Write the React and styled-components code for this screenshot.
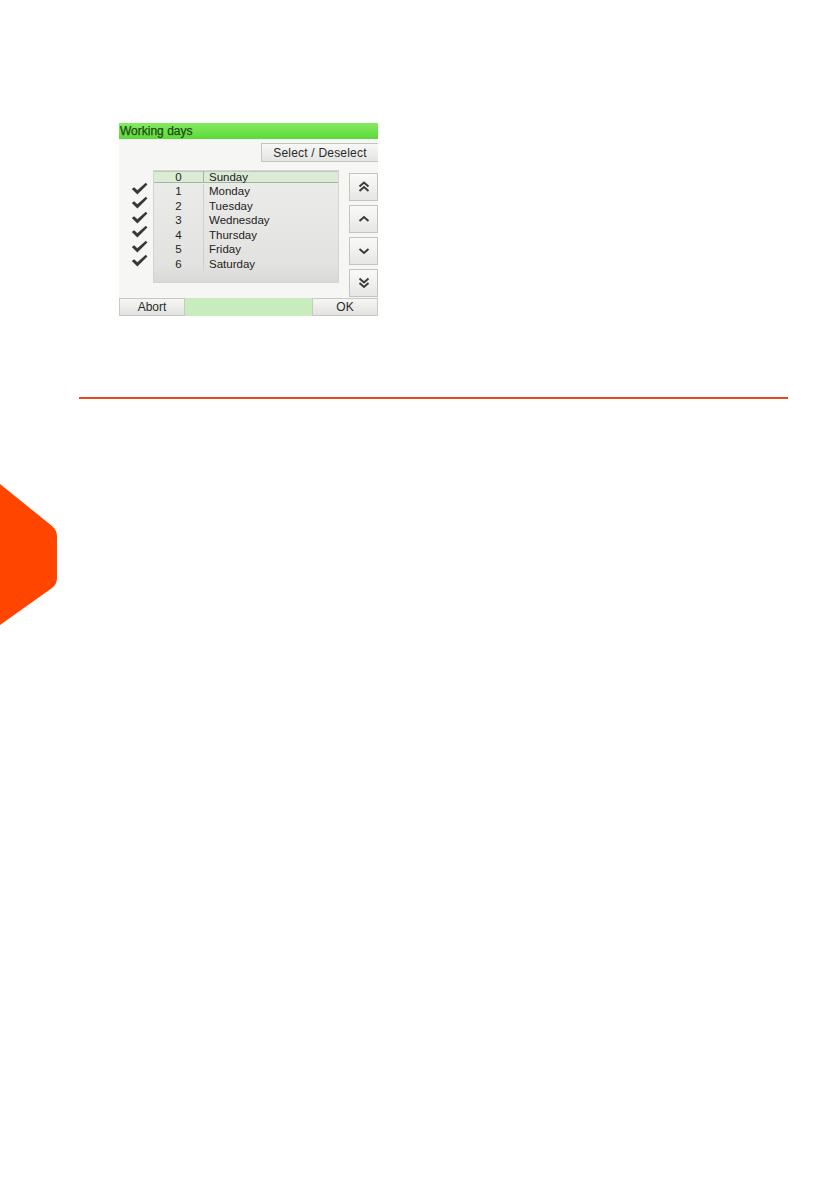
import React from 'react';
import styled, { createGlobalStyle } from 'styled-components';

const GlobalStyle = createGlobalStyle`
  html, body {
    margin: 0;
    padding: 0;
    background: #ffffff;
  }
  body {
    font-family: "Liberation Sans", Arial, sans-serif;
  }
`;

const Page = styled.div`
  width: 839px;
  min-height: 1191px;
  background: #fff;
  display: flex;
  flex-direction: column;
`;

const Figure = styled.div`
  padding: 123px 0 0 119px;
`;

const Screen = styled.div`
  width: 259px;
  height: 193px;
  display: flex;
  flex-direction: column;
  background: #f6f6f4;
  font-family: "Liberation Sans", Arial, sans-serif;
  font-size: 11.5px;
  color: #222;
`;

const TitleBar = styled.div`
  height: 16px;
  line-height: 16px;
  padding-left: 1px;
  background: linear-gradient(#84ea60, #5cd83a);
  color: #1e4a14;
  font-size: 12px;
  -webkit-text-stroke: 0.25px #1e4a14;
`;

const Body = styled.div`
  flex: 1;
  display: flex;
  flex-direction: column;
`;

const ToolRow = styled.div`
  display: flex;
  justify-content: flex-end;
  margin-top: 4px;
`;

const Button = styled.div`
  height: ${p => p.$h || 19}px;
  width: ${p => p.$w}px;
  box-sizing: border-box;
  display: flex;
  align-items: center;
  justify-content: center;
  background: linear-gradient(#f8f8f6, #e4e4e2);
  border: 1px solid #c4c4c0;
  border-right: none;
  font-size: 12px;
  color: #2a2a2a;
  letter-spacing: 0.2px;
`;

const MainRow = styled.div`
  flex: 1;
  display: flex;
  margin-top: 8px;
`;

const CheckCol = styled.div`
  width: 34px;
  padding-top: 11px;
  display: flex;
  flex-direction: column;
  align-items: center;
`;

const CheckCell = styled.div`
  height: 14.5px;
  display: flex;
  align-items: center;
  padding-left: 6px;
`;

const List = styled.div`
  width: 186px;
  height: 113px;
  box-sizing: border-box;
  background: linear-gradient(#ececea, #e2e2e0 85%, #d8d8d6);
  border: 1px solid #d4d4d0;
  display: flex;
  flex-direction: column;
`;

const Row = styled.div`
  height: ${p => (p.$head ? 11 : 14.5)}px;
  display: flex;
  align-items: center;
  background: ${p => (p.$head ? '#dcebd6' : 'transparent')};
  border-bottom: ${p => (p.$head ? '1px solid #9fb89a' : 'none')};
  box-shadow: ${p => (p.$head ? 'inset 0 1px 0 #b8cdb2' : 'none')};
  margin-bottom: ${p => (p.$head ? 1 : 0)}px;
`;

const NumCell = styled.div`
  width: 49px;
  text-align: center;
  align-self: stretch;
  display: flex;
  align-items: center;
  justify-content: center;
  border-right: 1px solid ${p => (p.$head ? '#9fb89a' : '#d0d0cc')};
`;

const NameCell = styled.div`
  padding-left: 5px;
`;

const ScrollCol = styled.div`
  margin-left: 10px;
  margin-top: 3px;
  display: flex;
  flex-direction: column;
  gap: 4px;
`;

const ScrollBtn = styled.div`
  width: 29px;
  height: 28px;
  box-sizing: border-box;
  display: flex;
  align-items: center;
  justify-content: center;
  background: linear-gradient(#fafaf8, #e6e6e4);
  border: 1px solid #c4c4c0;
`;

const Footer = styled.div`
  height: 18px;
  display: flex;
  background: #c9ecbe;
`;

const FooterBtn = styled.div`
  width: ${p => p.$w}px;
  box-sizing: border-box;
  display: flex;
  align-items: center;
  justify-content: center;
  background: linear-gradient(#f6f6f4, #e2e2e0);
  border: 1px solid #c8c8c4;
  font-size: 12px;
  color: #2a2a2a;
`;

const Spacer = styled.div`
  flex: 1;
`;

const Rule = styled.div`
  margin: 81px 0 0 79px;
  width: 709px;
  height: 2px;
  background: #e8481c;
`;

const SideTab = styled.div`
  margin-top: 85px;
  width: 58px;
  height: 141px;
`;

const Check = () => (
  <svg width="17" height="13" viewBox="0 0 17 13">
    <path d="M0.8 7 L3.2 5.2 L6.3 8.2 L14.8 0.8 L16.4 2.6 L6.4 12.4 Z" fill="#383838" />
  </svg>
);

const Chevron = ({ dir, double }) => {
  const up = dir === 'up';
  const one = y => (up ? `M2.5 ${y + 4} L7 ${y} L11.5 ${y + 4}` : `M2.5 ${y} L7 ${y + 4} L11.5 ${y}`);
  return (
    <svg width="14" height="12" viewBox="0 0 14 12">
      {double ? (
        <>
          <path d={one(1.5)} fill="none" stroke="#3a3a3a" strokeWidth="1.9" />
          <path d={one(6)} fill="none" stroke="#3a3a3a" strokeWidth="1.9" />
        </>
      ) : (
        <path d={one(4)} fill="none" stroke="#3a3a3a" strokeWidth="1.9" />
      )}
    </svg>
  );
};

const days = [
  { n: 0, name: 'Sunday', on: false },
  { n: 1, name: 'Monday', on: true },
  { n: 2, name: 'Tuesday', on: true },
  { n: 3, name: 'Wednesday', on: true },
  { n: 4, name: 'Thursday', on: true },
  { n: 5, name: 'Friday', on: true },
  { n: 6, name: 'Saturday', on: true },
];

export default function App() {
  return (
    <Page>
      <GlobalStyle />
      <Figure>
        <Screen>
          <TitleBar>Working days</TitleBar>
          <Body>
            <ToolRow>
              <Button $w={117}>Select / Deselect</Button>
            </ToolRow>
            <MainRow>
              <CheckCol>
                {days.slice(1).map(d => (
                  <CheckCell key={d.n}>{d.on && <Check />}</CheckCell>
                ))}
              </CheckCol>
              <List>
                {days.map((d, i) => (
                  <Row key={d.n} $head={i === 0}>
                    <NumCell $head={i === 0}>{d.n}</NumCell>
                    <NameCell>{d.name}</NameCell>
                  </Row>
                ))}
              </List>
              <ScrollCol>
                <ScrollBtn><Chevron dir="up" double /></ScrollBtn>
                <ScrollBtn><Chevron dir="up" /></ScrollBtn>
                <ScrollBtn><Chevron dir="down" /></ScrollBtn>
                <ScrollBtn><Chevron dir="down" double /></ScrollBtn>
              </ScrollCol>
            </MainRow>
          </Body>
          <Footer>
            <FooterBtn $w={66}>Abort</FooterBtn>
            <Spacer />
            <FooterBtn $w={66}>OK</FooterBtn>
          </Footer>
        </Screen>
      </Figure>
      <Rule />
      <SideTab>
        <svg width="58" height="141" viewBox="0 0 58 141">
          <path
            d="M0 0 L52 42 Q57 46 57 53 L57 94 Q57 100 52 104 L0 141 Z"
            fill="#ff4500"
          />
        </svg>
      </SideTab>
    </Page>
  );
}
